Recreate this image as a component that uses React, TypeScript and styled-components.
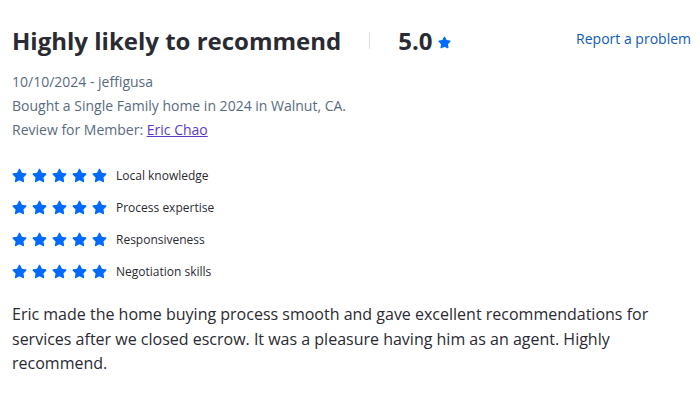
import React from "react";
import styled, { createGlobalStyle } from "styled-components";

const Global = createGlobalStyle`
  html, body { margin: 0; padding: 0; background: #fff; }
  body { font-family: "Open Sans", "Liberation Sans", sans-serif; color: #2a2a33; }
`;

const Card = styled.div`
  padding: 20px 9px 0 12px;
  width: 700px;
  box-sizing: border-box;
`;

const Header = styled.div`
  display: flex;
  align-items: center;
  height: 40px;
`;

const Title = styled.h2`
  margin: 0;
  font-size: 24px;
  font-weight: 700;
  color: #2a2a33;
`;

const Divider = styled.span`
  width: 1px;
  height: 16px;
  background: #e3dcd6;
  margin: 2px 28px 0 28px;
`;

const Score = styled.span`
  font-size: 24px;
  font-weight: 700;
  color: #2a2a33;
`;

const ScoreStar = styled.span`
  display: inline-flex;
  margin: 5px 0 0 5px;
`;

const Report = styled.a`
  margin-left: auto;
  font-size: 14px;
  color: #0d5bba;
  text-decoration: none;
  margin-top: -3px;
`;

const Meta = styled.div`
  margin-top: 10px;
  font-size: 14px;
  line-height: 24px;
  color: #596b82;
`;

const MemberLink = styled.a`
  color: #5b3cc4;
  text-decoration: underline;
`;

const Ratings = styled.div`
  margin-top: 23px;
  display: flex;
  flex-direction: column;
  gap: 12px;
`;

const RatingRow = styled.div`
  display: flex;
  align-items: center;
  height: 20px;
`;

const Stars = styled.div`
  display: flex;
  gap: 5px;
  width: 104px;
`;

const Label = styled.span`
  font-size: 12px;
  color: #2a2a33;
`;

const Body = styled.p`
  margin: 21px 0 0 0;
  font-size: 16px;
  line-height: 24.5px;
  color: #2a2a33;
  max-width: 660px;
`;

const Star = ({ size = 14 }: { size?: number }) => (
  <svg width={size} height={size} viewBox="0 0 576 512" fill="#006aff">
    <path d="M259.3 17.8L194 150.2 47.9 171.5c-26.2 3.8-36.7 36.1-17.7 54.6l105.7 103-25 145.5c-4.5 26.3 23.2 46 46.4 33.7L288 439.6l130.7 68.7c23.2 12.2 50.9-7.4 46.4-33.7l-25-145.5 105.7-103c19-18.5 8.5-50.8-17.7-54.6L382 150.2 316.7 17.8c-11.7-23.6-45.6-23.9-57.4 0z" />
  </svg>
);

const categories = [
  "Local knowledge",
  "Process expertise",
  "Responsiveness",
  "Negotiation skills",
];

export default function App() {
  return (
    <>
      <Global />
      <Card>
        <Header>
          <Title>Highly likely to recommend</Title>
          <Divider />
          <Score>5.0</Score>
          <ScoreStar>
            <Star size={13} />
          </ScoreStar>
          <Report href="#">Report a problem</Report>
        </Header>
        <Meta>
          <div>10/10/2024 - jeffigusa</div>
          <div>Bought a Single Family home in 2024 in Walnut, CA.</div>
          <div>
            Review for Member: <MemberLink href="#">Eric Chao</MemberLink>
          </div>
        </Meta>
        <Ratings>
          {categories.map((c) => (
            <RatingRow key={c}>
              <Stars>
                {[0, 1, 2, 3, 4].map((i) => (
                  <Star key={i} size={15} />
                ))}
              </Stars>
              <Label>{c}</Label>
            </RatingRow>
          ))}
        </Ratings>
        <Body>
          Eric made the home buying process smooth and gave excellent
          recommendations for services after we closed escrow. It was a
          pleasure having him as an agent. Highly recommend.
        </Body>
      </Card>
    </>
  );
}
